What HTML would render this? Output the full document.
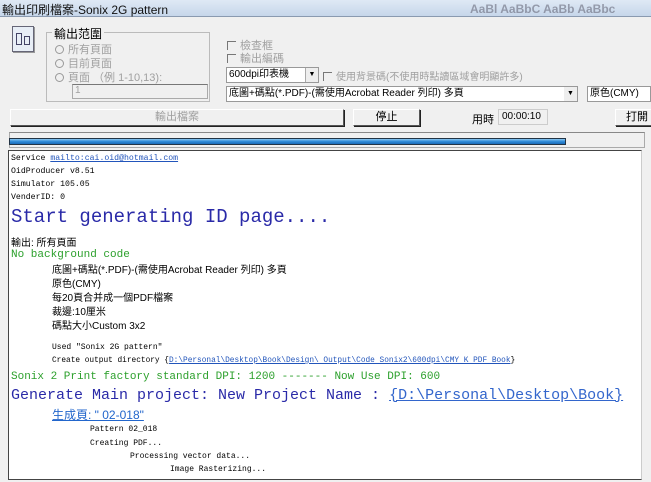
<!DOCTYPE html>
<html><head><meta charset="utf-8"><style>
*{margin:0;padding:0;box-sizing:border-box}
body{width:651px;height:482px;overflow:hidden;background:#f0f0f0;font-family:"Liberation Sans","Noto Sans CJK TC",sans-serif;font-size:11px;color:#000;position:relative}
.a{position:absolute;white-space:nowrap}
.g{color:#a0a0a0}
.mono{font-family:"Liberation Mono","Noto Sans CJK TC",monospace}
.btn{position:absolute;background:#f0f0f0;border:1px solid;border-color:#fff #555 #555 #fff;box-shadow:1px 1px 0 #222;text-align:center;font-size:11px;line-height:14px}
.cb{display:inline-block;width:9px;height:9px;border-left:1px solid #777;border-top:1px solid #777;margin-right:4px;vertical-align:-1px}
.rd{display:inline-block;width:9px;height:9px;border:1px solid #999;border-radius:50%;margin-right:4px;vertical-align:-1px}
.lk{color:#2255bb;text-decoration:underline}
.log{font-family:"Liberation Mono","Noto Sans CJK TC",monospace}
</style></head><body>
<div class="a" style="left:0;top:0;width:651px;height:17px;background:linear-gradient(#dfe9f5,#c6d6ea);border-bottom:1px solid #8a9ab0"></div>
<div class="a" style="left:2px;top:1px;font-size:12px;color:#111">輸出印刷檔案-Sonix 2G pattern</div>
<div class="a" style="left:470px;top:2px;font-size:12px;font-weight:bold;color:#556;opacity:.5">AaBl AaBbC AaBb AaBbc</div>
<!-- icon -->
<div class="a" style="left:12px;top:26px;width:22px;height:26px;background:#e8eef6;border:1px solid #667;box-shadow:1px 1px 0 #999"></div>
<div class="a" style="left:16px;top:33px;width:6px;height:12px;border:1px solid #446"></div>
<div class="a" style="left:24px;top:36px;width:6px;height:9px;border:1px solid #446"></div>
<!-- group -->
<div class="a" style="left:46px;top:32px;width:164px;height:70px;border:1px solid #bbb"></div>
<div class="a" style="left:52px;top:25px;background:#f0f0f0;padding:0 2px;font-size:12px">輸出范圍</div>
<div class="a g" style="left:55px;top:41px"><span class="rd"></span>所有頁面</div>
<div class="a g" style="left:55px;top:55px"><span class="rd"></span>目前頁面</div>
<div class="a g" style="left:55px;top:69px"><span class="rd"></span>頁面 （例 1-10,13):</div>
<div class="a g" style="left:72px;top:84px;width:136px;height:15px;border:1px solid #aaa;border-top-color:#777;padding-left:2px;font-size:10px">1</div>
<div class="a g" style="left:227px;top:37px"><span class="cb"></span>檢查框</div>
<div class="a g" style="left:227px;top:50px"><span class="cb"></span>輸出編碼</div>
<div class="a" style="left:226px;top:67px;width:93px;height:16px;background:#fff;border:1px solid #999;font-size:10px;padding-left:2px;line-height:14px">600dpi印表機</div>
<div class="a" style="left:305px;top:68px;width:13px;height:14px;background:#eee;border-left:1px solid #aaa;font-size:7px;text-align:center;line-height:14px">▼</div>
<div class="a g" style="left:323px;top:68px;font-size:10px"><span class="cb"></span>使用背景碼(不使用時點讀區域會明顯許多)</div>
<div class="a" style="left:226px;top:86px;width:352px;height:16px;background:#fff;border:1px solid #999;font-size:10px;padding-left:2px;line-height:14px">底圖+碼點(*.PDF)-(需使用Acrobat Reader 列印) 多頁</div>
<div class="a" style="left:564px;top:87px;width:13px;height:14px;background:#eee;font-size:7px;text-align:center;line-height:14px">▼</div>
<div class="a" style="left:587px;top:86px;width:64px;height:16px;background:#fff;border:1px solid #999;font-size:10px;padding-left:2px;line-height:14px">原色(CMY)</div>
<!-- buttons -->
<div class="btn g" style="left:10px;top:109px;width:334px;height:17px">輸出檔案</div>
<div class="btn" style="left:353px;top:109px;width:67px;height:17px">停止</div>
<div class="a" style="left:472px;top:111px">用時</div>
<div class="a" style="left:498px;top:109px;width:50px;height:16px;border:1px solid #ccc;font-size:10px;padding-left:3px;line-height:14px">00:00:10</div>
<div class="btn" style="left:615px;top:109px;width:40px;height:17px;text-align:left;padding-left:10px">打開</div>
<!-- progress -->
<div class="a" style="left:9px;top:132px;width:636px;height:16px;border:1px solid #aaa;border-top-color:#888"></div>
<div class="a" style="left:9px;top:138px;width:557px;height:7px;background:linear-gradient(#8cc8f0,#2e8ad8 50%,#1c6cb8);border:1px solid #234"></div>
<!-- log -->
<div class="a" style="left:8px;top:150px;width:634px;height:330px;background:#fff;border:1px solid #444;border-right-color:#ccc"></div>
<div class="a log" style="left:11px;top:154px;font-size:8.2px">Service <span class="lk">mailto:cai.oid@hotmail.com</span></div>
<div class="a log" style="left:11px;top:167px;font-size:8.2px">OidProducer v8.51</div>
<div class="a log" style="left:11px;top:180px;font-size:8.2px">Simulator 105.05</div>
<div class="a log" style="left:11px;top:193px;font-size:8.2px">VenderID: 0</div>
<div class="a log" style="left:11px;top:206px;font-size:19px;color:#2a2aa8">Start generating ID page....</div>
<div class="a" style="left:11px;top:234px;font-size:10px">輸出: 所有頁面</div>
<div class="a log" style="left:11px;top:249px;font-size:11px;color:#2ca02c">No background code</div>
<div class="a" style="left:52px;top:264px;font-size:10px;line-height:14px">底圖+碼點(*.PDF)-(需使用Acrobat Reader 列印) 多頁<br>原色(CMY)<br>每20頁合并成一個PDF檔案<br>裁邊:10厘米<br>碼點大小Custom 3x2</div>
<div class="a log" style="left:52px;top:343px;font-size:8px">Used  "Sonix 2G pattern"</div>
<div class="a log" style="left:52px;top:357px;font-size:7.8px">Create output directory {<span class="lk">D:\Personal\Desktop\Book\Design\ Output\Code Sonix2\600dpi\CMY K PDF Book</span>}</div>
<div class="a log" style="left:11px;top:371px;font-size:11px;color:#2ca02c">Sonix 2 Print factory standard DPI: 1200 ------- Now Use DPI: 600</div>
<div class="a log" style="left:11px;top:387px;font-size:15px;color:#2a2aa8">Generate Main project: New Project Name : <span class="lk" style="color:#3366cc">{D:\Personal\Desktop\Book}</span></div>
<div class="a" style="left:52px;top:406px;font-size:12px;color:#2266cc;text-decoration:underline">生成頁: " 02-018"</div>
<div class="a log" style="left:90px;top:425px;font-size:8px">Pattern 02_018</div>
<div class="a log" style="left:90px;top:439px;font-size:8px">Creating PDF...</div>
<div class="a log" style="left:130px;top:452px;font-size:8px">Processing vector data...</div>
<div class="a log" style="left:170px;top:465px;font-size:8px">Image Rasterizing...</div>
</body></html>
